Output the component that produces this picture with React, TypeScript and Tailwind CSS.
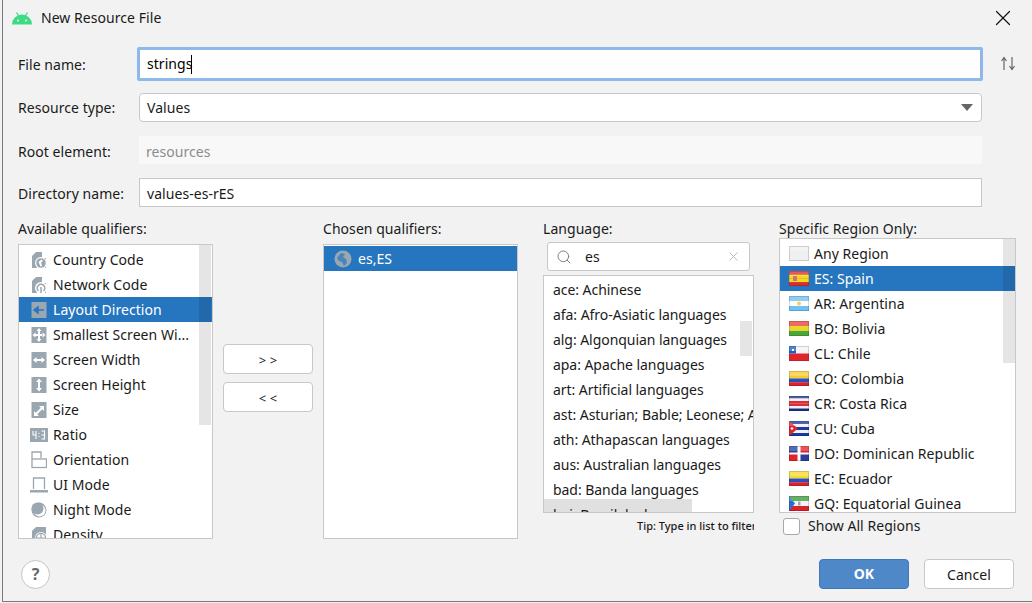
import React from 'react';
import { Search, X } from 'lucide-react';

const font = "[font-family:'Noto_Sans',sans-serif]";

const QualifierIcon = ({ name }: { name: string }) => {
  const c = '#9aa7b0';
  const box = (inner: React.ReactNode) => (
    <svg width="16" height="18" viewBox="0 0 16 18" className="shrink-0">
      <rect x="0.5" y="1" width="15" height="16" fill={c} />
      {inner}
    </svg>
  );
  const arrow = 'white';
  switch (name) {
    case 'Country Code':
      return (
        <svg width="16" height="18" viewBox="0 0 16 18" className="shrink-0">
          <path d="M1 5l4-4h6v6h4v10H1z" fill={c} />
          <circle cx="10" cy="12" r="6" fill="white" />
          <circle cx="10" cy="12" r="4.800" fill={c} />
          <path d="M7.500 11l3-2.500 1.500 1.500-2 1.500 1 3.500-1.500.5z" fill="white" />
        </svg>
      );
    case 'Network Code':
      return (
        <svg width="16" height="18" viewBox="0 0 16 18" className="shrink-0">
          <path d="M1 5l4-4h6v6h4v10H1z" fill={c} />
          <circle cx="10" cy="12" r="6" fill="white" />
          <path d="M7.500 15a3.800 3.800 0 1 1 5 0M10 11v6" stroke={c} strokeWidth="1.500" fill="none" />
        </svg>
      );
    case 'Layout Direction':
      return box(<path d="M3 9h10M7 6v6L3 9z" stroke="#2675bf" strokeWidth="1.500" fill="#2675bf" />);
    case 'Smallest Screen Wi...':
      return box(<path d="M8 2l2.500 3h-5zM8 16l2.500-3h-5zM1.500 9l3-2.500v5zM14.500 9l-3-2.500v5zM7 5h2v8H7zM4 8h8v2H4z" fill={arrow} />);
    case 'Screen Width':
      return box(<path d="M2 9l3.500-3v2h5V6l3.500 3-3.500 3v-2h-5v2z" fill={arrow} />);
    case 'Screen Height':
      return box(<path d="M8 2.500l3 3.500H9v6h2l-3 3.500L5 12h2V6H5z" fill={arrow} />);
    case 'Size':
      return box(<path d="M3 15v-5l1.800 1.800 5-5L8 5h5v5l-1.800-1.800-5 5L8 15z" fill={arrow} />);
    case 'Ratio':
      return (
        <svg width="18" height="14" viewBox="0 0 18 14" className="shrink-0">
          <rect width="18" height="14" fill={c} />
          <path d="M3 3v4h3M6 3v8M9 5v1M9 8v1M11.500 3h3v8h-3M11.500 7h3" stroke="white" strokeWidth="1.100" fill="none" />
        </svg>
      );
    case 'Orientation':
      return (
        <svg width="16" height="18" viewBox="0 0 16 18" fill="none" stroke={c} strokeWidth="1.300" className="shrink-0">
          <path d="M1 8V1h9v6" />
          <rect x="1" y="8" width="14.500" height="8.500" />
        </svg>
      );
    case 'UI Mode':
      return (
        <svg width="18" height="16" viewBox="0 0 18 16" fill="none" className="shrink-0">
          <path d="M3.500 12V1h11v11" stroke={c} strokeWidth="1.300" />
          <rect y="13" width="18" height="2.500" fill={c} />
        </svg>
      );
    case 'Night Mode':
      return (
        <svg width="16" height="16" viewBox="0 0 16 16" className="shrink-0">
          <circle cx="8" cy="8" r="7.500" fill={c} />
          <circle cx="8.500" cy="8.500" r="6" fill="white" />
          <circle cx="6.500" cy="6.500" r="6" fill={c} />
        </svg>
      );
    default:
      return (
        <svg width="16" height="18" viewBox="0 0 16 18" className="shrink-0">
          <path d="M1 5l4-4h10v6H15v10H1z" fill={c} />
          <circle cx="10" cy="12" r="6" fill="white" />
          <circle cx="10" cy="12" r="4.600" fill="none" stroke={c} strokeWidth="1.300" />
          <path d="M5.500 12h9M10 7.500v9" stroke={c} strokeWidth="1.200" />
        </svg>
      );
  }
};

const stripes = (colors: string[]) => {
  const h = 15 / colors.length;
  return colors.map((color, i) => <rect key={i} x="0" y={i * h} width="20" height={h + 0.1} fill={color} />);
};

const Flag = ({ code }: { code: string }) => {
  let inner: React.ReactNode = null;
  if (code === 'Any') inner = <rect width="20" height="15" fill="#f0f0f0" />;
  if (code === 'ES') inner = <>{stripes(['#e02a2a', '#fbd71c', '#fbd71c', '#e02a2a'])}<rect x="4" y="5" width="4" height="5" fill="#d0707a" /></>;
  if (code === 'AR') inner = <>{stripes(['#6fc0f2', '#ffffff', '#6fc0f2'])}<circle cx="10" cy="7.500" r="2" fill="#f7d04e" /></>;
  if (code === 'BO') inner = stripes(['#e8423c', '#ecd62c', '#4aa83a']);
  if (code === 'CL') inner = <>{stripes(['#f4f4f4', '#e0262c'])}<rect width="7" height="7.500" fill="#1f5fc0" /><rect x="3" y="3" width="2" height="2" fill="white" /></>;
  if (code === 'CO') inner = stripes(['#f6cb2e', '#f6cb2e', '#2a50c0', '#d8232c']);
  if (code === 'CR') inner = stripes(['#1d2f86', '#f2f2f2', '#dc2f3a', '#dc2f3a', '#f2f2f2', '#1d2f86']);
  if (code === 'CU') inner = <>{stripes(['#1d3aa0', '#f2f2f2', '#1d3aa0', '#f2f2f2', '#1d3aa0'])}<path d="M0 0l9 7.500L0 15z" fill="#e0262c" /><circle cx="3" cy="7.500" r="1.300" fill="white" /></>;
  if (code === 'DO') inner = <><rect width="20" height="15" fill="white" /><rect width="8.500" height="6.500" fill="#2a3f9a" /><rect x="11.500" width="8.500" height="6.500" fill="#e0262c" /><rect y="8.500" width="8.500" height="6.500" fill="#e0262c" /><rect x="11.500" y="8.500" width="8.500" height="6.500" fill="#2a3f9a" /></>;
  if (code === 'EC') inner = stripes(['#f6d92e', '#f6d92e', '#2a50c0', '#d8232c']);
  if (code === 'GQ') inner = <>{stripes(['#3a9a3a', '#f4f4f4', '#d8232c'])}<path d="M0 0l6 7.500L0 15z" fill="#2a6fd0" /><rect x="9" y="5.500" width="2.500" height="4" fill="#9aa7b0" /></>;
  return (
    <svg width="20" height="15" viewBox="0 0 20 15" className="shrink-0">
      {inner}
      {/* glossy bevel of the flag icons */}
      <rect width="20" height="5" fill="white" opacity="0.22" />
      <rect x="0.500" y="0.500" width="19" height="14" fill="none" stroke="black" strokeOpacity="0.15" />
    </svg>
  );
};

const qualifiers = ['Country Code', 'Network Code', 'Layout Direction', 'Smallest Screen Wi...', 'Screen Width', 'Screen Height', 'Size', 'Ratio', 'Orientation', 'UI Mode', 'Night Mode', 'Density'];

const languages = ['ace: Achinese', 'afa: Afro-Asiatic languages', 'alg: Algonquian languages', 'apa: Apache languages', 'art: Artificial languages', 'ast: Asturian; Bable; Leonese; Asturleonese', 'ath: Athapascan languages', 'aus: Australian languages', 'bad: Banda languages', 'bai: Bamileke languages'];

const regions = [
  { code: 'Any', label: 'Any Region' },
  { code: 'ES', label: 'ES: Spain' },
  { code: 'AR', label: 'AR: Argentina' },
  { code: 'BO', label: 'BO: Bolivia' },
  { code: 'CL', label: 'CL: Chile' },
  { code: 'CO', label: 'CO: Colombia' },
  { code: 'CR', label: 'CR: Costa Rica' },
  { code: 'CU', label: 'CU: Cuba' },
  { code: 'DO', label: 'DO: Dominican Republic' },
  { code: 'EC', label: 'EC: Ecuador' },
  { code: 'GQ', label: 'GQ: Equatorial Guinea' },
];

const Row = ({ label, children, className, labelClass }: { label: string; children: React.ReactNode; className: string; labelClass?: string }) => (
  <div className={`flex items-center ${className}`}>
    <span className={`w-[121px] shrink-0 text-[#1a1a1a] ${labelClass ?? ''}`}>{label}</span>
    {children}
  </div>
);

const App: React.FC = () => {
  return (
    <div className={`w-[1032px] h-[603px] bg-[#f2f2f2] overflow-hidden text-[14px] leading-[20px] tracking-[0.05px] text-[#1a1a1a] ${font}`}>
      <div className="ml-[2px] h-[602px] border-l border-b border-[#7a7a7a] pl-[15px] flex flex-col">
        {/* title bar */}
        <div className="h-[37px] flex items-center relative shrink-0">
          <svg width="20" height="13" viewBox="0 0 20 13" className="-ml-[6px] -mt-[1px]">
            <path d="M0 12.500a10 10 0 0 1 20 0z" fill="#3ddc84" />
            <path d="M4.500 0.500L7 4.500M15.500 0.500L13 4.500" stroke="#3ddc84" strokeWidth="1.300" />
            <circle cx="6" cy="8.500" r="1" fill="#f2f2f2" />
            <circle cx="14" cy="8.500" r="1" fill="#f2f2f2" />
          </svg>
          <span className="ml-[9px] -mt-[1px]">New Resource File</span>
          <X className="absolute left-[972px] top-[5px] text-[#111]" size={26} strokeWidth={1.1} />
        </div>

        <Row label="File name:" labelClass="pt-[2px]" className="mt-[11px] h-[31px]">
          <div className="-ml-[2px] w-[846px] h-[34px] shrink-0 border-[3px] border-[#8fb8ea] bg-white flex items-center pl-[7px] pt-[1px] rounded-[2px]">
            <span className="text-black">strings</span>
            <span className="w-px h-[19px] bg-black -ml-[1px]" />
          </div>
          <svg width="16" height="15" viewBox="0 0 16 15" className="ml-[17px]" fill="none" stroke="#666" strokeWidth="1.200">
            <path d="M4 14V2M1.500 5L4 1.500 6.500 5" />
            <path d="M12 1v12M9.500 10l2.500 3.500 2.500-3.500" />
          </svg>
        </Row>

        <Row label="Resource type:" className="mt-[14px] h-[29px]">
          <div className="w-[843px] h-[29px] border border-[#c8c8c8] rounded-[4px] bg-white flex items-center justify-between pl-[7px] pr-[8px]">
            <span>Values</span>
            <svg width="12" height="7" viewBox="0 0 12 7"><path d="M0 0h12L6 7z" fill="#666" /></svg>
          </div>
        </Row>

        <Row label="Root element:" labelClass="pt-[4px]" className="mt-[14px] h-[28px]">
          <div className="w-[843px] h-[28px] bg-[#f8f8f8] flex items-center pl-[7px] pt-[4px] text-[#8c8c8c]">resources</div>
        </Row>

        <Row label="Directory name:" labelClass="pt-[2px]" className="mt-[14px] h-[29px]">
          <div className="w-[843px] h-[29px] border border-[#c8c8c8] bg-white flex items-center pl-[7px] pt-[2px]">values-es-rES</div>
        </Row>

        {/* qualifier columns */}
        <div className="mt-[13px] h-[319px] flex shrink-0">
          <div className="w-[195px] flex flex-col shrink-0">
            <div className="h-[18px] leading-[18px]">Available qualifiers:</div>
            <div className="mt-[6px] flex-1 relative border border-[#c8c8c8] bg-white overflow-hidden pt-[2px]">
              {qualifiers.map(q => {
                const selected = q === 'Layout Direction';
                return (
                  <div key={q} className={`h-[25px] flex items-center pl-[12px] gap-[6px] whitespace-nowrap ${selected ? 'bg-[#2675bf] text-white' : ''}`}>
                    <span className="w-[16px] flex justify-center shrink-0"><QualifierIcon name={q} /></span>
                    <span>{q}</span>
                  </div>
                );
              })}
              <div className="absolute right-[1px] top-0 w-[12px] h-[180px] bg-black/10" />
            </div>
          </div>

          <div className="ml-[10px] w-[90px] shrink-0 flex flex-col gap-[8px] pt-[124px]">
            <button className="h-[30px] bg-white border border-[#c8c8c8] rounded-[4px] text-[13px] pt-[2px]">&gt; &gt;</button>
            <button className="h-[30px] bg-white border border-[#c8c8c8] rounded-[4px] text-[13px] pt-[2px]">&lt; &lt;</button>
          </div>

          <div className="ml-[10px] w-[195px] shrink-0 flex flex-col">
            <div className="h-[18px] leading-[18px]">Chosen qualifiers:</div>
            <div className="mt-[6px] flex-1 border border-[#c8c8c8] bg-white pt-[1px]">
              <div className="h-[25px] flex items-center pl-[10px] gap-[6px] bg-[#2675bf] text-white">
                <svg width="18" height="18" viewBox="0 0 18 18">
                  <circle cx="9" cy="9" r="8.500" fill="#9aa7b0" />
                  <path d="M3 8l4-5 4 1-2 3 3 2 1 4-3 3-2-4-3-1z" fill="#2675bf" opacity="0.7" />
                </svg>
                <span className="pt-[1px]">es,ES</span>
              </div>
            </div>
          </div>

          <div className="ml-[25px] w-[211px] shrink-0 flex flex-col">
            <div className="h-[18px] leading-[18px]">Language:</div>
            <div className="mt-[4px] ml-[4px] w-[203px] h-[29px] shrink-0 border border-[#c8c8c8] rounded-[3px] bg-white flex items-center pl-[8px] pr-[8px]">
              <Search size={16} strokeWidth={1.5} className="text-[#808080] shrink-0" />
              <span className="ml-[13px] flex-1">es</span>
              <X size={15} strokeWidth={1.4} className="text-[#b0b0b0]" />
            </div>
            <div className="mt-[4px] h-[238px] relative border border-[#c8c8c8] bg-white overflow-hidden pt-[1px] tracking-[-0.05px]">
              {languages.map(l => (
                <div key={l} className="h-[25px] flex items-center pl-[9px] whitespace-nowrap">{l}</div>
              ))}
              <div className="absolute right-[1px] top-[45px] w-[12px] h-[35px] bg-black/10" />
              <div className="absolute left-0 bottom-0 w-[148px] h-[13px] bg-black/12" />
            </div>
            <div className="mt-[5px] h-[16px] leading-[16px] text-[11px] tracking-normal font-medium pl-[94px] whitespace-nowrap overflow-hidden">Tip: Type in list to filter</div>
          </div>

          <div className="ml-[25px] w-[237px] shrink-0 flex flex-col">
            <div className="h-[18px] leading-[18px]">Specific Region Only:</div>
            <div className="h-[275px] relative border border-[#c8c8c8] bg-white overflow-hidden pt-[2px]">
              {regions.map(r => {
                const selected = r.code === 'ES';
                return (
                  <div key={r.code} className={`h-[25px] flex items-center pl-[9px] gap-[5px] whitespace-nowrap ${selected ? 'bg-[#2675bf] text-white' : ''}`}>
                    <Flag code={r.code} />
                    <span>{r.label}</span>
                  </div>
                );
              })}
              <div className="absolute right-0 top-0 w-[12px] h-[124px] bg-black/10" />
            </div>
            <label className="mt-[3px] flex items-center ml-[4px]">
              <span className="w-[17px] h-[17px] border border-[#a8a8a8] rounded-[3px] bg-white" />
              <span className="ml-[8px]">Show All Regions</span>
            </label>
          </div>
        </div>

        {/* footer */}
        <div className="mt-[20px] h-[30px] flex items-center shrink-0">
          <div className="ml-[3px] w-[29px] h-[29px] rounded-full border border-[#c4c4c4] bg-white flex items-center justify-center font-bold text-[16px] text-[#666]">?</div>
          <button className="ml-[769px] w-[90px] h-[30px] rounded-[4px] bg-[#4f88c8] border border-[#3f78b8] text-white font-bold">OK</button>
          <button className="ml-[15px] w-[90px] h-[30px] rounded-[4px] bg-white border border-[#c8c8c8] pt-[1px]">Cancel</button>
        </div>
      </div>
    </div>
  );
};

export default App;
